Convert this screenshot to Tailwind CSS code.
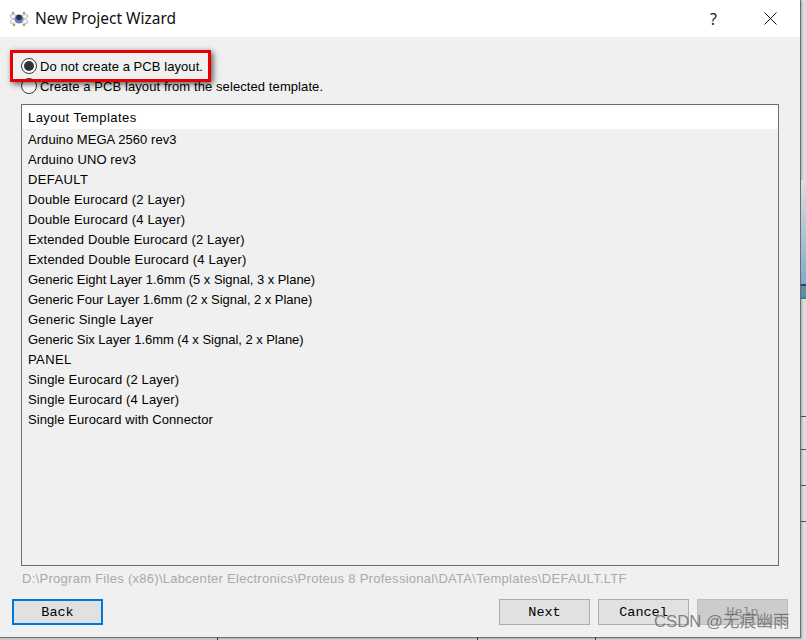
<!DOCTYPE html>
<html lang="en">

<head>
    <meta charset="UTF-8">
    <title>New Project Wizard</title>
    <script src="https://cdn.jsdelivr.net/npm/@tailwindcss/browser@4"></script>
</head>

<body class="bg-[#dedede] overflow-hidden">
    <div class="relative w-[806px] h-[640px] font-['Liberation_Sans',sans-serif] text-[#000]">
        <!-- Background showing round the dialog -->
        <div class="absolute right-0 top-[180px] w-[5px] h-[104px] bg-gradient-to-b from-[#dedede] to-[#7fabc9]"></div>
        <div class="absolute right-0 top-[284px] w-[5px] h-[15px] bg-[#5a929f] border-t-2 border-b-2 border-t-[#1e4a6b] border-b-[#3f77a8]"></div>
        <div class="absolute right-0 top-[416px] w-[5px] h-px bg-[#2d5a7d]"></div>
        <div class="absolute right-0 top-[449px] w-[5px] h-px bg-[#2d5a7d]"></div>
        <div class="absolute right-0 top-[485px] w-[5px] h-px bg-[#2d5a7d]"></div>
        <div class="absolute right-0 top-[521px] w-[5px] h-px bg-[#2d5a7d]"></div>
        <div class="absolute left-0 bottom-0 w-[217px] h-[2px] bg-[#c6c6c6]"></div>
        <div class="absolute left-[217px] bottom-0 w-px h-[3px] bg-[#2b3d4f]"></div>
        <div class="absolute left-[477px] bottom-0 w-px h-[3px] bg-[#2b3d4f]"></div>
        <div class="absolute left-[595px] bottom-0 w-px h-[3px] bg-[#2b3d4f]"></div>

        <!-- Dialog -->
        <div class="flex flex-col w-[801px] h-[638px] bg-[#f0f0f0] border-r border-b border-[#6d6d6d] shadow-[1px_1px_2px_rgba(0,0,0,0.25)]">
            <!-- Title bar -->
            <div class="flex items-center h-[37px] bg-white shrink-0">
                <svg class="ml-[9px] w-[20px] h-[18px]" viewBox="0 0 20 18" fill="none">
                    <ellipse cx="10" cy="9" rx="9.5" ry="2.6" stroke="#c4c4c4" stroke-width="1" transform="rotate(22 10 9)" />
                    <ellipse cx="10" cy="9" rx="9.5" ry="2.6" stroke="#c4c4c4" stroke-width="1" transform="rotate(-22 10 9)" />
                    <circle cx="10" cy="9" r="4.5" fill="#5f83c0" />
                    <circle cx="10" cy="7.5" r="2.8" fill="#26324f" />
                    <circle cx="4" cy="3" r="1.3" fill="#b39a64" />
                    <circle cx="15" cy="3" r="1.3" fill="#b39a64" />
                    <circle cx="5" cy="15" r="1.3" fill="#b39a64" />
                    <circle cx="15" cy="15" r="1.3" fill="#b39a64" />
                </svg>
                <span class="ml-[6px] text-[15.5px] font-['Noto_Sans',sans-serif] text-[#111]">New Project Wizard</span>
                <span class="ml-auto text-[16px] font-['Noto_Sans',sans-serif] text-[#222]">?</span>
                <svg class="ml-[47px] mr-[23px] w-[13px] h-[13px]" viewBox="0 0 13 13" stroke="#111" stroke-width="1">
                    <path d="M0.5 0.5L12.5 12.5M12.5 0.5L0.5 12.5" />
                </svg>
            </div>

            <!-- Body -->
            <div class="flex flex-col flex-1 pl-[21px] pr-[21px] pt-[19px] text-[13px] leading-[20px]">
                <label class="flex items-center h-[20px]">
                    <span class="flex items-center justify-center w-[16px] h-[16px] rounded-full border border-[#333] bg-white">
                        <span class="w-[10px] h-[10px] rounded-full bg-[#333]"></span>
                    </span>
                    <span class="ml-[3px] pt-[2px] tracking-[0.07px]">Do not create a PCB layout.</span>
                </label>
                <label class="flex items-center h-[20px]">
                    <span class="w-[16px] h-[16px] rounded-full border border-[#333] bg-white"></span>
                    <span class="ml-[3px] pt-[2px] tracking-[0.09px]">Create a PCB layout from the selected template.</span>
                </label>

                <!-- Template list -->
                <div class="flex flex-col mt-[8px] h-[462px] border border-[#6d6d6d] pl-[6px]">
                    <div class="bg-white -ml-[6px] pl-[6px] h-[24px] leading-[26px] tracking-[0.44px]">Layout Templates</div>
                    <div class="flex flex-col pt-px">
                        <div class="tracking-[0.05px]">Arduino MEGA 2560 rev3</div>
                        <div class="tracking-[0.12px]">Arduino UNO rev3</div>
                        <div class="tracking-[0.4px]">DEFAULT</div>
                        <div class="tracking-[0.16px]">Double Eurocard (2 Layer)</div>
                        <div class="tracking-[0.16px]">Double Eurocard (4 Layer)</div>
                        <div class="tracking-[0.15px]">Extended Double Eurocard (2 Layer)</div>
                        <div class="tracking-[0.2px]">Extended Double Eurocard (4 Layer)</div>
                        <div class="tracking-[-0.04px]">Generic Eight Layer 1.6mm (5 x Signal, 3 x Plane)</div>
                        <div class="tracking-[-0.04px]">Generic Four Layer 1.6mm (2 x Signal, 2 x Plane)</div>
                        <div class="tracking-[0.2px]">Generic Single Layer</div>
                        <div class="tracking-[-0.04px]">Generic Six Layer 1.6mm (4 x Signal, 2 x Plane)</div>
                        <div class="tracking-[0.4px]">PANEL</div>
                        <div class="tracking-[0.12px]">Single Eurocard (2 Layer)</div>
                        <div class="tracking-[0.12px]">Single Eurocard (4 Layer)</div>
                        <div class="tracking-[0.07px]">Single Eurocard with Connector</div>
                    </div>
                </div>

                <div class="mt-[3px] pl-px text-[#a9a9a9] tracking-[0.28px]">D:\Program Files (x86)\Labcenter Electronics\Proteus 8 Professional\DATA\Templates\DEFAULT.LTF</div>

                <!-- Buttons -->
                <div class="flex mt-[10px] -ml-[9px] -mr-[9px] font-['Liberation_Mono',monospace] text-[13.5px]">
                    <button class="w-[91px] h-[26px] pt-px bg-[#e1e1e1] border-2 border-[#0078d7]">Back</button>
                    <button class="ml-auto w-[91px] h-[26px] pt-px bg-[#e1e1e1] border border-[#adadad]">Next</button>
                    <button class="ml-[8px] w-[91px] h-[26px] pt-px bg-[#e1e1e1] border border-[#adadad]">Cancel</button>
                    <button class="ml-[8px] w-[91px] h-[26px] pt-px bg-[#cccccc] border border-[#bfbfbf] text-[#8a8a8a]">Help</button>
                </div>
            </div>
        </div>

        <!-- Red highlight drawn over the screenshot -->
        <div class="absolute left-[10px] top-[50px] w-[201px] h-[32px] border-[3px] border-[#e60000] shadow-[2px_2px_6px_rgba(0,0,0,0.65)]"></div>

        <!-- Watermark -->
        <div class="absolute left-[654px] top-[612px] text-[16.7px] leading-[20px] text-[#555]/70 font-['Liberation_Sans','Noto_Sans_CJK_SC',sans-serif]">CSDN @无痕幽雨</div>
    </div>
</body>

</html>
